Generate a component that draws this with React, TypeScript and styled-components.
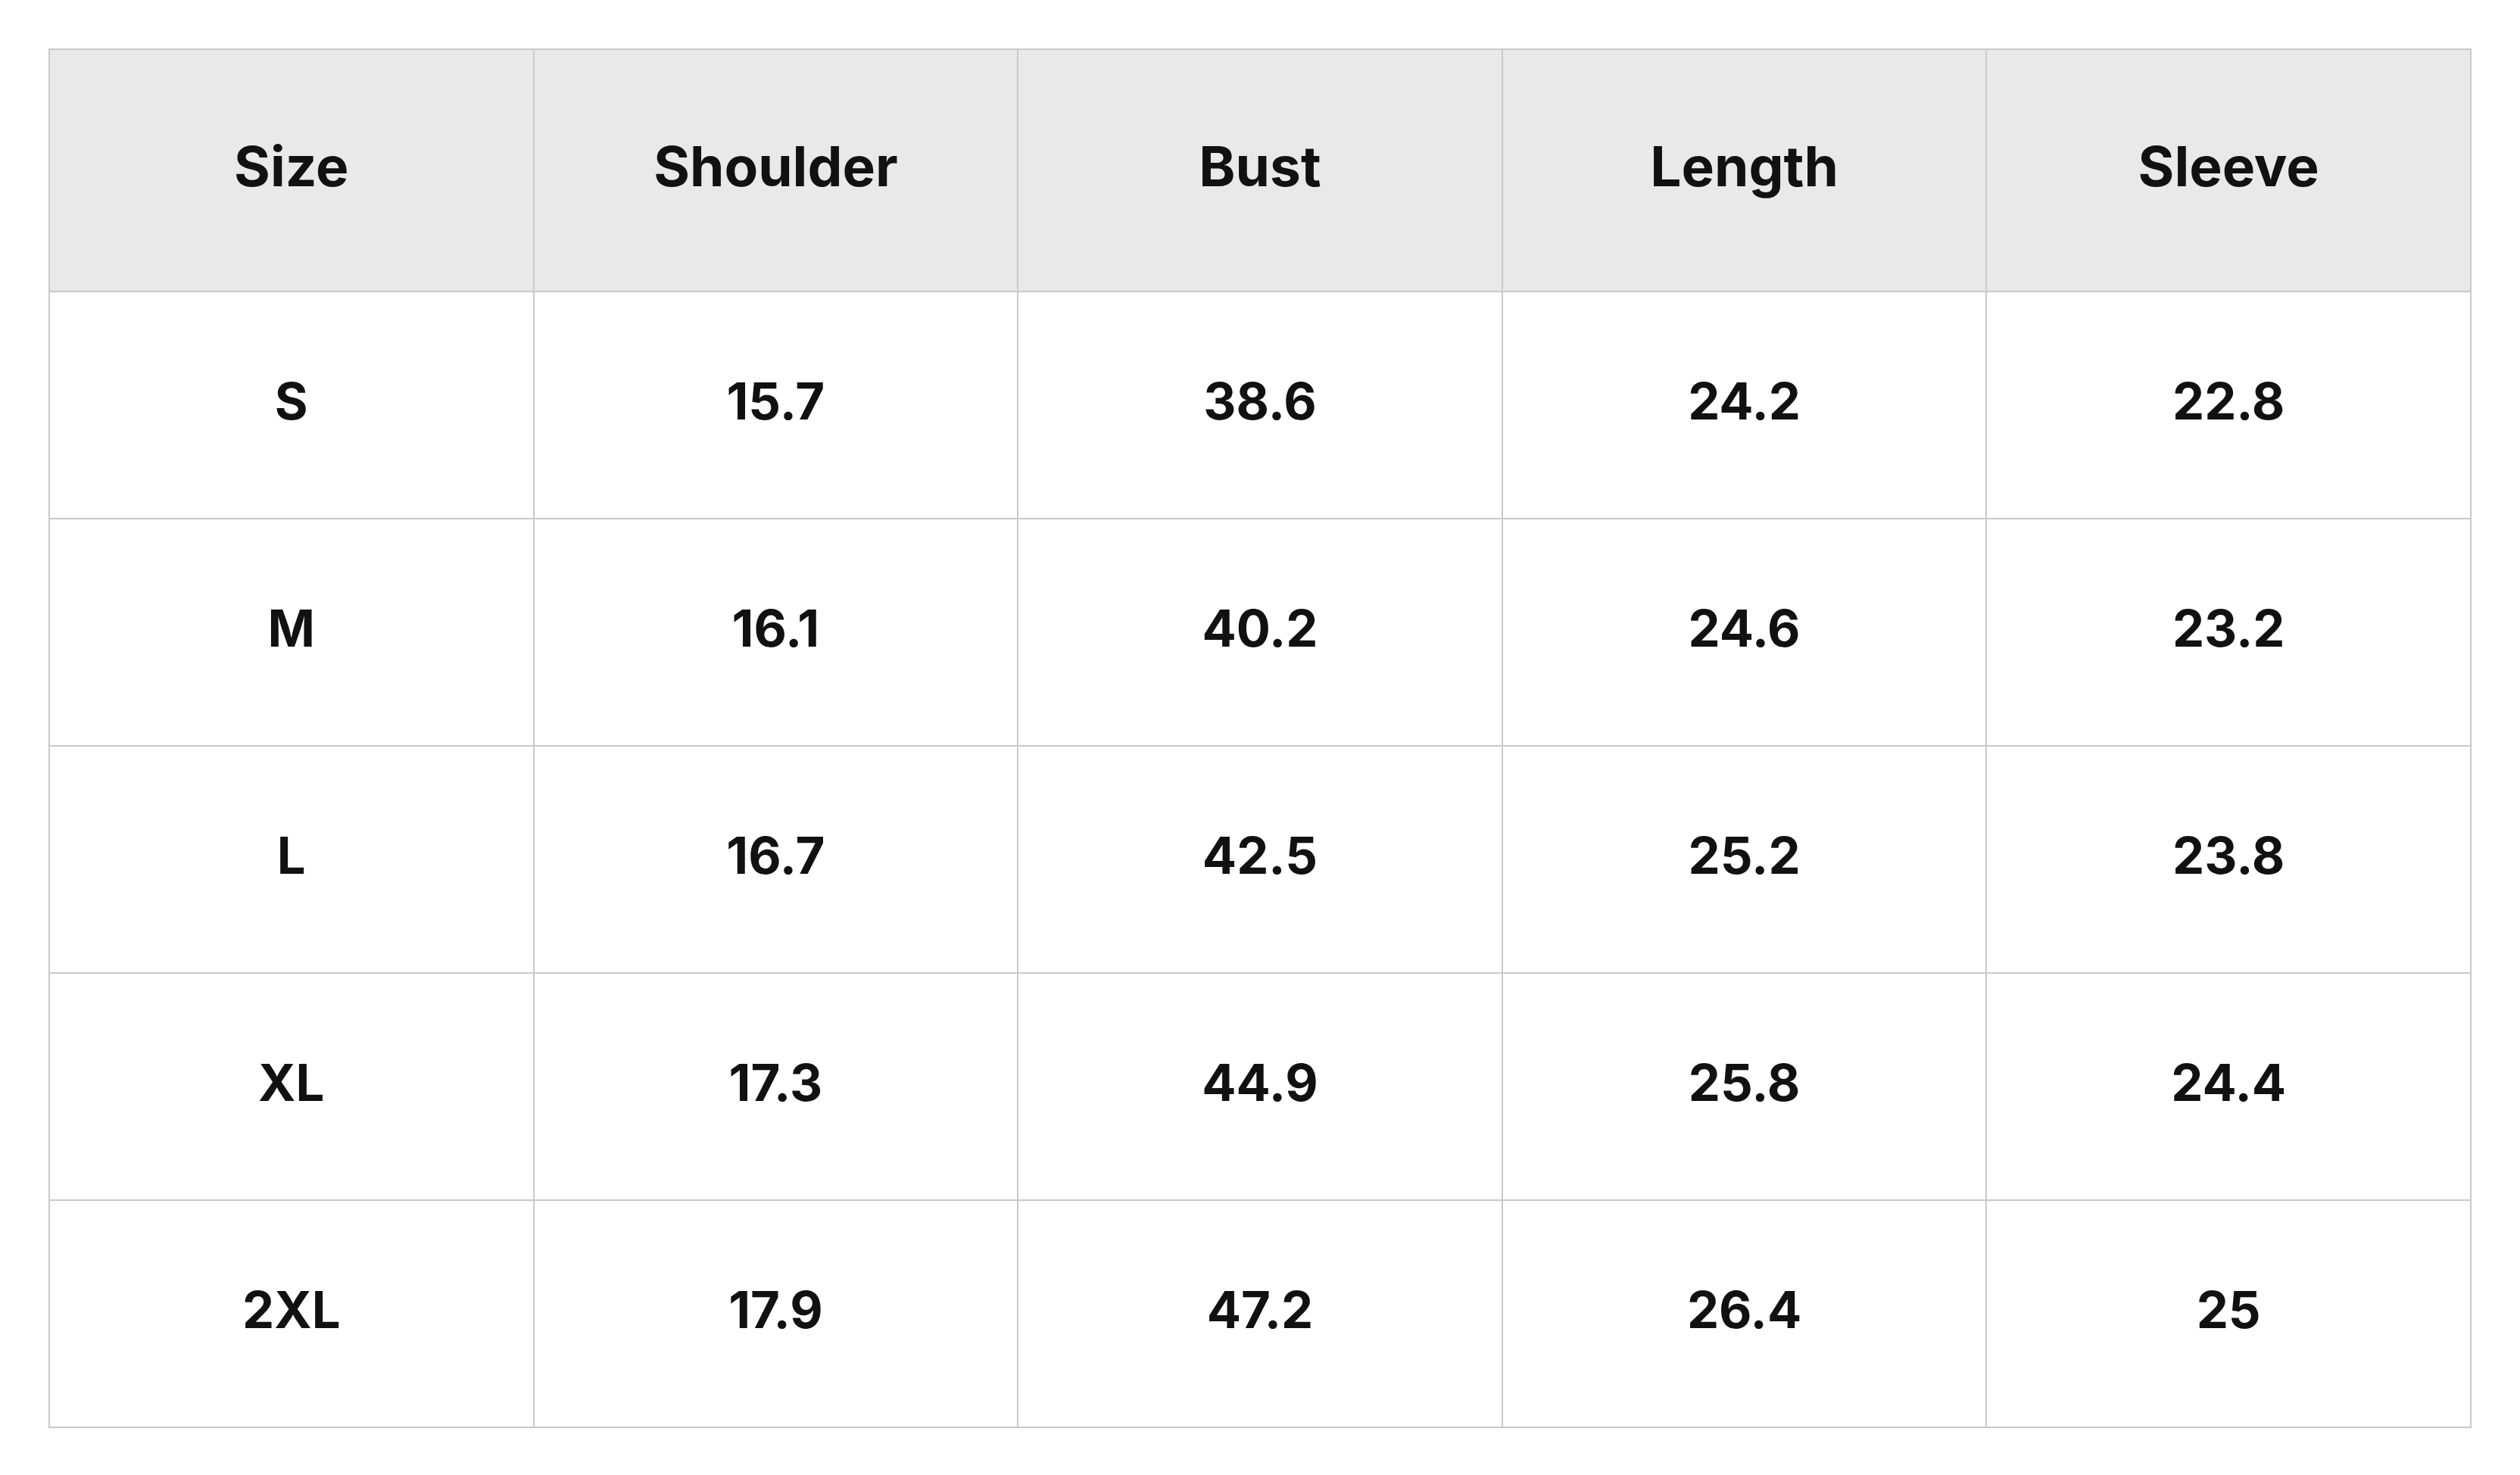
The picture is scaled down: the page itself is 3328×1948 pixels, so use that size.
import React from "react";
import styled, { createGlobalStyle } from "styled-components";

const GlobalStyle = createGlobalStyle`
  html, body {
    margin: 0;
    padding: 0;
    background: #ffffff;
  }
  body {
    font-family: Inter, "Noto Sans", "Liberation Sans", sans-serif;
    color: #111111;
  }
`;

const columns = ["Size", "Shoulder", "Bust", "Length", "Sleeve"];

const rows = [
  ["S", "15.7", "38.6", "24.2", "22.8"],
  ["M", "16.1", "40.2", "24.6", "23.2"],
  ["L", "16.7", "42.5", "25.2", "23.8"],
  ["XL", "17.3", "44.9", "25.8", "24.4"],
  ["2XL", "17.9", "47.2", "26.4", "25"],
];

const Page = styled.div`
  padding: 64px;
`;

const Table = styled.table`
  width: 3200px;
  border-collapse: collapse;
  table-layout: fixed;
`;

const HeadCell = styled.th`
  height: 306px;
  padding: 0 0 12px;
  background: #e9e9e9;
  border: 2px solid #c9c9c9;
  font-size: 73px;
  font-weight: 700;
  text-align: center;
  vertical-align: middle;
  color: #111111;
`;

const Cell = styled.td`
  height: 286px;
  padding: 0 0 12px;
  border: 2px solid #c9c9c9;
  font-size: 67px;
  font-weight: 700;
  text-align: center;
  vertical-align: middle;
  color: #111111;
`;

const App: React.FC = () => {
  return (
    <Page>
      <GlobalStyle />
      <Table>
        <thead>
          <tr>
            {columns.map((c) => (
              <HeadCell key={c}>{c}</HeadCell>
            ))}
          </tr>
        </thead>
        <tbody>
          {rows.map((r) => (
            <tr key={r[0]}>
              {r.map((v, i) => (
                <Cell key={i}>{v}</Cell>
              ))}
            </tr>
          ))}
        </tbody>
      </Table>
    </Page>
  );
};

export default App;
